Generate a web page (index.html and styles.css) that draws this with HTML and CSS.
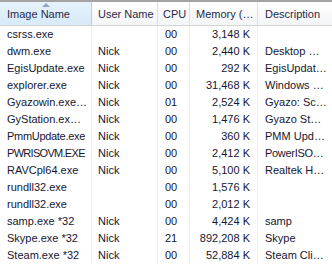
FILE: index.html
```html
<!DOCTYPE html>
<html>
<head>
<meta charset="utf-8">
<link rel="stylesheet" href="styles.css">
</head>
<body>
<div class="list">
  <div class="topline"></div>
  <div class="row head">
    <div class="c c1 sorted"><span class="arrow"></span>Image Name</div>
    <div class="c c2">User Name</div>
    <div class="c c3">CPU</div>
    <div class="c c4h">Memory (…</div>
    <div class="c c5">Description</div>
  </div>
  <div class="row"><div class="c c1">csrss.exe</div><div class="c c2"></div><div class="c c3">00</div><div class="c c4">3,148 K</div><div class="c c5"></div></div>
  <div class="row"><div class="c c1">dwm.exe</div><div class="c c2">Nick</div><div class="c c3">00</div><div class="c c4">2,440 K</div><div class="c c5">Desktop …</div></div>
  <div class="row"><div class="c c1">EgisUpdate.exe</div><div class="c c2">Nick</div><div class="c c3">00</div><div class="c c4">292 K</div><div class="c c5">EgisUpdat…</div></div>
  <div class="row"><div class="c c1">explorer.exe</div><div class="c c2">Nick</div><div class="c c3">00</div><div class="c c4">31,468 K</div><div class="c c5">Windows …</div></div>
  <div class="row"><div class="c c1">Gyazowin.exe…</div><div class="c c2">Nick</div><div class="c c3">01</div><div class="c c4">2,524 K</div><div class="c c5">Gyazo: Sc…</div></div>
  <div class="row"><div class="c c1">GyStation.ex…</div><div class="c c2">Nick</div><div class="c c3">00</div><div class="c c4">1,476 K</div><div class="c c5">Gyazo St…</div></div>
  <div class="row"><div class="c c1 snug">PmmUpdate.exe</div><div class="c c2">Nick</div><div class="c c3">00</div><div class="c c4">360 K</div><div class="c c5">PMM Upd…</div></div>
  <div class="row"><div class="c c1 tight">PWRISOVM.EXE</div><div class="c c2">Nick</div><div class="c c3">00</div><div class="c c4">2,412 K</div><div class="c c5 snug">PowerISO…</div></div>
  <div class="row"><div class="c c1">RAVCpl64.exe</div><div class="c c2">Nick</div><div class="c c3">00</div><div class="c c4">5,100 K</div><div class="c c5">Realtek H…</div></div>
  <div class="row"><div class="c c1">rundll32.exe</div><div class="c c2"></div><div class="c c3">00</div><div class="c c4">1,576 K</div><div class="c c5"></div></div>
  <div class="row"><div class="c c1">rundll32.exe</div><div class="c c2"></div><div class="c c3">00</div><div class="c c4">2,012 K</div><div class="c c5"></div></div>
  <div class="row"><div class="c c1">samp.exe *32</div><div class="c c2">Nick</div><div class="c c3">00</div><div class="c c4">4,424 K</div><div class="c c5">samp</div></div>
  <div class="row"><div class="c c1">Skype.exe *32</div><div class="c c2">Nick</div><div class="c c3">21</div><div class="c c4">892,208 K</div><div class="c c5">Skype</div></div>
  <div class="row"><div class="c c1">Steam.exe *32</div><div class="c c2">Nick</div><div class="c c3">00</div><div class="c c4">52,884 K</div><div class="c c5">Steam Cli…</div></div>
</div>
</body>
</html>
```

FILE: styles.css
```css
html, body {
  margin: 0;
  padding: 0;
  background: #ffffff;
}
body {
  width: 332px;
  height: 266px;
  overflow: hidden;
  font-family: "Liberation Sans", Arial, sans-serif;
  font-size: 11px;
  color: #161630;
}
.list {
  display: flex;
  flex-direction: column;
}
.topline {
  height: 2px;
  background: #a3a3a3;
}
.row {
  display: grid;
  grid-template-columns: 92px 66px 32px 68px 1fr;
  height: 17px;
  line-height: 17px;
}
.row.head {
  height: 24px;
  line-height: 24px;
  background: linear-gradient(#ffffff, #f4f5f7);
  border-bottom: 1px solid #d5d5d5;
  box-sizing: border-box;
  color: #1e2a4a;
}
.c {
  white-space: nowrap;
  overflow: hidden;
  border-right: 1px solid #eaeff6;
  padding-left: 6px;
}
.head .c {
  border-right: 1px solid #dedfe1;
  position: relative;
}
.head .c1.sorted {
  background: linear-gradient(#e6f3fc, #d8eaf8);
  border-right: 1px solid #a9d3ef;
}
.c1 { padding-left: 7px; }
.c3 { padding-left: 7px; }
.head .c3 { padding-left: 5px; }
.c4 {
  text-align: right;
  padding-left: 0;
  padding-right: 7px;
}
.c4h { padding-left: 6px; }
.c5 {
  padding-left: 7px;
  border-right: none;
}
.head .c5 { border-right: none; }
.tight { letter-spacing: -0.7px; }
.snug { letter-spacing: -0.3px; }
.arrow {
  position: absolute;
  left: 42px;
  top: 1px;
  width: 0;
  height: 0;
  border-left: 4px solid transparent;
  border-right: 4px solid transparent;
  border-bottom: 4px solid #8fa6bf;
}
```
